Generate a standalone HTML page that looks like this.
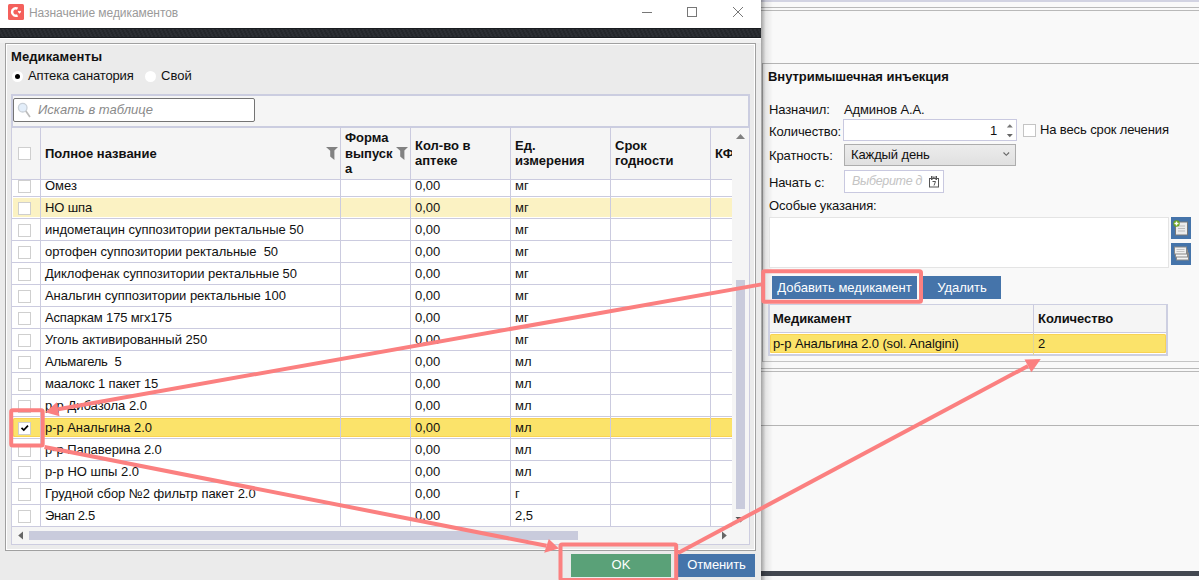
<!DOCTYPE html>
<html><head><meta charset="utf-8">
<style>
*{box-sizing:border-box;margin:0;padding:0}
html,body{width:1199px;height:580px;overflow:hidden;background:#f8f8f8;font-family:"Liberation Sans",sans-serif;font-size:13px;color:#111}
.abs{position:absolute}
#rw{position:absolute;left:761px;top:0;width:438px;height:580px;background:#f9f9f9}
#dlg{position:absolute;left:0;top:0;width:761px;height:580px;background:#ebebeb;overflow:hidden}
#tb{position:absolute;left:0;top:0;width:761px;height:28px;background:#fff}
#stripe{position:absolute;left:0;top:28px;width:761px;height:10px;background:#26292d;border-top:1px solid #191c20;border-bottom:1px solid #191c20;background-image:repeating-linear-gradient(63deg,#24272b 0,#24272b 1.800px,#2c2f34 1.800px,#2c2f34 3.600px)}
.t{position:absolute;white-space:nowrap;line-height:16px}
.b{font-weight:bold}
#rw .t{margin-top:1px;letter-spacing:-0.120px}
#rw .t.b{letter-spacing:-0.050px}
.vl{position:absolute;width:1px;background:#cbcbdf}
.hl{position:absolute;height:1px;background:#cbcbdf}
.cb{position:absolute;width:13px;height:13px;background:#fff;border:1px solid #cfcfcf}
.row{position:absolute;left:13px;width:720px;height:22px}
.row .n{position:absolute;left:32px;top:3px;line-height:16px;white-space:nowrap}
.row .q{position:absolute;left:402px;top:3px;line-height:16px}
.row .u{position:absolute;left:502px;top:3px;line-height:16px}
.row .cb{left:5px;top:5px}
.hov{left:0;top:1px;width:720px;height:19px;background:#fbf2c3}
.sel{left:0;top:1px;width:720px;height:19px;background:#fbe36a;border-radius:2px;box-shadow:inset 0 0 0 1px #f9d352,inset 0 -1px 0 #f5c63e}
.btn{position:absolute;color:#fff;text-align:center;line-height:22px;height:23px;padding-top:1px;background:#4574aa;white-space:nowrap}
</style></head><body>

<!-- right (background) window -->
<div id="rw">
  <div class="abs" style="left:0;top:0;width:438px;height:2px;background:#d2d3e2"></div>
  <div class="abs" style="left:0;top:7px;width:438px;height:1px;background:#b9b9b9"></div>
  <div class="abs" style="left:0;top:10px;width:438px;height:1px;background:#b9b9b9"></div>
  <!-- panel -->
  <div class="abs" style="left:1px;top:63px;width:437px;height:299px;border-top:1px solid #b4b4b4;border-left:1px solid #b4b4b4;border-bottom:1px solid #c4c4c4"></div>
  <div class="abs" style="left:0;top:368px;width:438px;height:1px;background:#b9b9b9"></div>
  <div class="abs" style="left:0;top:371px;width:438px;height:1px;background:#b9b9b9"></div>
  <div class="abs" style="left:0;top:425px;width:438px;height:1px;background:#b4b4b4"></div>
  <div class="abs" style="left:0;top:571px;width:438px;height:5px;background:#42474f"></div>
  <!-- shadow of dialog -->
  <div class="abs" style="left:0;top:0;width:12px;height:580px;background:linear-gradient(90deg,rgba(0,0,0,.35),rgba(0,0,0,.08) 40%,rgba(0,0,0,0))"></div>

  <div class="t b" style="left:7px;top:68px">Внутримышечная инъекция</div>
  <div class="t" style="left:8px;top:101px">Назначил:</div>
  <div class="t" style="left:83px;top:101px">Админов А.А.</div>
  <div class="t" style="left:8px;top:123px">Количество:</div>
  <div class="abs" style="left:82px;top:119px;width:174px;height:22px;background:#fff;border:1px solid #c9c9e0"></div>
  <div class="t" style="left:229px;top:122px">1</div>
  <svg class="abs" style="left:243px;top:122px" width="12" height="17"><path d="M2.800 5.500H8.800L5.800 2.300Z" fill="#777"/><path d="M2.800 12H8.800L5.800 15.200Z" fill="#666"/></svg>
  <div class="cb" style="left:262px;top:124px;border-color:#c4c4c4"></div>
  <div class="t" style="left:279px;top:121px">На весь срок лечения</div>
  <div class="t" style="left:8px;top:147px">Кратность:</div>
  <div class="abs" style="left:83px;top:144px;width:172px;height:22px;background:linear-gradient(#ececec,#e0e0e0);border:1px solid #adadad"></div>
  <div class="t" style="left:90px;top:146px">Каждый день</div>
  <svg class="abs" style="left:241px;top:151px" width="10" height="8"><path d="M1.500 1.500L4.300 4.300L7.100 1.500" fill="none" stroke="#666" stroke-width="1.100"/></svg>
  <div class="t" style="left:8px;top:174px">Начать с:</div>
  <div class="abs" style="left:83px;top:170px;width:100px;height:23px;background:#fff;border:1px solid #c9c9e0"></div>
  <div class="t" style="left:91px;top:172px;font-style:italic;color:#c4c4c4;font-size:12.500px;letter-spacing:-0.300px">Выберите д</div>
  <svg class="abs" style="left:168px;top:176px" width="11" height="12"><rect x="0.5" y="2.5" width="9" height="8.5" fill="#fff" stroke="#555"/><rect x="2" y="0" width="1.5" height="4" fill="#555"/><rect x="6.5" y="0" width="1.5" height="4" fill="#555"/><rect x="4.2" y="0.5" width="1.4" height="2.5" fill="#555"/><path d="M3.5 5.5 H6.5 L5 9.5" fill="none" stroke="#555" stroke-width="1"/></svg>
  <div class="t" style="left:8px;top:197px">Особые указания:</div>
  <div class="abs" style="left:8px;top:217px;width:400px;height:51px;background:#fff;border:1px solid #e4e4e4"></div>
  <!-- icon buttons -->
  <div class="abs" style="left:410px;top:217px;width:20px;height:22px;background:#4574aa"></div>
  <div class="abs" style="left:410px;top:243px;width:20px;height:22px;background:#4574aa"></div>
  <svg class="abs" style="left:410px;top:217px" width="20" height="48">
    <rect x="4.5" y="5" width="12" height="13" fill="#ececec" stroke="#777" stroke-width="1"/>
    <path d="M7 9H14M7 11.5H14M7 14H14" stroke="#bbb" stroke-width="1"/>
    <circle cx="5.5" cy="6.5" r="3.2" fill="#6aa31c"/><path d="M5.5 4.5V8.5M3.5 6.500H7.5" stroke="#fff" stroke-width="1.4"/>
    <rect x="5.500" y="36" width="12" height="7" fill="#f4f4f4" stroke="#888"/>
    <rect x="4.500" y="33" width="12" height="7" fill="#f4f4f4" stroke="#888"/>
    <rect x="3.500" y="30" width="12" height="7" fill="#f0f0f0" stroke="#888"/>
    <path d="M5.5 32.500H13.5M5.5 34.500H13.5" stroke="#c4c4c4"/>
  </svg>
  <!-- buttons -->
  <div class="btn" style="left:11px;top:276px;width:145px">Добавить медикамент</div>
  <div class="btn" style="left:162px;top:276px;width:78px">Удалить</div>
  <!-- table -->
  <div class="abs" style="left:7px;top:304px;width:400px;height:52px;background:#fff;border:2px solid #cdcfe1;border-top-width:1.500px"></div>
  <div class="abs" style="left:9px;top:305px;width:396px;height:28px;background:#f5f5f5;border-bottom:1px solid #cbcbdf"></div>
  <div class="vl" style="left:272px;top:305px;height:50px"></div>
  <div class="t b" style="left:12px;top:310px">Медикамент</div>
  <div class="t b" style="left:277px;top:310px">Количество</div>
  <div class="abs" style="left:9px;top:334px;width:396px;height:19px;background:#fbe36a;border-radius:2px;box-shadow:inset 0 0 0 1px #f9d352,inset 0 -1px 0 #f5c63e"></div>
  <div class="vl" style="left:272px;top:333px;height:22px;background:#e0d49a"></div>
  <div class="t" style="left:12px;top:335px">р-р Анальгина 2.0 (sol. Analgini)</div>
  <div class="t" style="left:277px;top:335px">2</div>
</div>

<!-- dialog -->
<div id="dlg">
  <div id="tb"></div>
  <svg class="abs" style="left:8px;top:4px" width="16" height="16"><rect width="16" height="16" rx="1.5" fill="#f4605c"/><path d="M9.56 4.690A3.750 3.750 0 1 0 9.560 11.310" fill="none" stroke="#fff" stroke-width="2.500"/><path d="M11.500 9.700L10 8.100A0.850 0.850 0 0 1 11.500 7.200A0.850 0.850 0 0 1 13 8.100Z" fill="#fff"/></svg>
  <div class="t" style="left:29px;top:5px;font-size:12px;letter-spacing:-0.060px;color:#9a9a9a">Назначение медикаментов</div>
  <svg class="abs" style="left:640px;top:0" width="120" height="28"><path d="M2 12.500H12" stroke="#777" stroke-width="1"/><rect x="47.500" y="7.500" width="9" height="9" fill="none" stroke="#777"/><path d="M93 7L103 17M103 7L93 17" stroke="#777" stroke-width="1"/></svg>
  <div id="stripe"></div>
  <div class="abs" style="left:0;top:38px;width:761px;height:5px;background:#f0f0f0;border-top:1px solid #fff"></div>
  <!-- group panel -->
  <div class="abs" style="left:5px;top:43px;width:751px;height:508px;border:1px solid #a0a0a0;box-shadow:inset 0 0 0 1px #fff"></div>
  <div class="t b" style="left:11px;top:49px;letter-spacing:0.090px">Медикаменты</div>
  <div class="abs" style="left:12px;top:71px;width:11px;height:11px;border-radius:50%;background:#fff"></div>
  <div class="abs" style="left:15px;top:74px;width:5px;height:5px;border-radius:50%;background:#000"></div>
  <div class="t" style="left:28px;top:68px;letter-spacing:-0.150px">Аптека санатория</div>
  <div class="abs" style="left:145px;top:71px;width:11px;height:11px;border-radius:50%;background:#fff"></div>
  <div class="t" style="left:161px;top:68px">Свой</div>

  <!-- search panel + grid frame -->
  <div class="abs" style="left:11px;top:94px;width:739px;height:451px;background:#f5f5f5;border:1px solid #cdcde0"></div>
  <div class="abs" style="left:11px;top:94px;width:739px;height:34px;border:2px solid #cbcde0"></div>
  <div class="abs" style="left:13px;top:98px;width:242px;height:24px;background:#fff;border:1px solid #747474;border-radius:2px"></div>
  <svg class="abs" style="left:17px;top:102px" width="16" height="18"><circle cx="5.700" cy="5.700" r="4.300" fill="#e3eefa" stroke="#c9d0d8" stroke-width="1.300"/><path d="M8.800 9L13 15" stroke="#bcbcbc" stroke-width="1.700"/></svg>
  <div class="t" style="left:38px;top:102px;font-style:italic;color:#8a8a8a">Искать в таблице</div>

  <!-- grid body bg -->
  <div class="abs" style="left:12px;top:180px;width:721px;height:347px;background:#fff"></div>
  <!-- header texts -->
  <div class="cb" style="left:18px;top:147px"></div>
  <div class="t b" style="left:45px;top:146px">Полное название</div>
  <div class="t b" style="left:345px;top:130px;line-height:15.500px;white-space:normal;width:50px">Форма выпуск а</div>
  <div class="t b" style="left:415px;top:138px;line-height:15px;white-space:normal;width:80px">Кол-во в аптеке</div>
  <div class="t b" style="left:515px;top:138px;line-height:15px;white-space:normal;width:80px">Ед. измерения</div>
  <div class="t b" style="left:615px;top:138px;line-height:15px;white-space:normal;width:80px">Срок годности</div>
  <div class="abs b" style="left:715px;top:146px;width:17px;overflow:hidden;line-height:16px;white-space:nowrap">КФ</div>
  <svg class="abs" style="left:326px;top:146px" width="13" height="15"><path d="M0 1H12L8.400 4.600V14L4.200 10.600V4.800Z" fill="#828282"/></svg>
  <svg class="abs" style="left:396px;top:146px" width="13" height="15"><path d="M0 1H12L8.400 4.600V14L4.200 10.600V4.800Z" fill="#828282"/></svg>
  <div class="hl" style="left:12px;top:179px;width:721px"></div>

  <div class="row" style="top:175px; clip-path:inset(5px 0 0 0);"><div class="cb"></div><div class="n">Омез</div><div class="q">0,00</div><div class="u">мг</div><div class="hl" style="left:-1px;top:21px;width:721px"></div></div>
<div class="row" style="top:197px;"><div class="abs hov"></div><div class="cb"></div><div class="n" style="letter-spacing:-0.135px">НО шпа</div><div class="q">0,00</div><div class="u">мг</div><div class="hl" style="left:-1px;top:21px;width:721px"></div></div>
<div class="row" style="top:219px;"><div class="cb"></div><div class="n">индометацин суппозитории ректальные 50</div><div class="q">0,00</div><div class="u">мг</div><div class="hl" style="left:-1px;top:21px;width:721px"></div></div>
<div class="row" style="top:241px;"><div class="cb"></div><div class="n" style="letter-spacing:-0.053px">ортофен суппозитории ректальные&nbsp; 50</div><div class="q">0,00</div><div class="u">мг</div><div class="hl" style="left:-1px;top:21px;width:721px"></div></div>
<div class="row" style="top:263px;"><div class="cb"></div><div class="n" style="letter-spacing:-0.049px">Диклофенак суппозитории ректальные 50</div><div class="q">0,00</div><div class="u">мг</div><div class="hl" style="left:-1px;top:21px;width:721px"></div></div>
<div class="row" style="top:285px;"><div class="cb"></div><div class="n" style="letter-spacing:-0.052px">Анальгин суппозитории ректальные 100</div><div class="q">0,00</div><div class="u">мг</div><div class="hl" style="left:-1px;top:21px;width:721px"></div></div>
<div class="row" style="top:307px;"><div class="cb"></div><div class="n" style="letter-spacing:-0.152px">Аспаркам 175 мгх175</div><div class="q">0,00</div><div class="u">мг</div><div class="hl" style="left:-1px;top:21px;width:721px"></div></div>
<div class="row" style="top:329px;"><div class="cb"></div><div class="n">Уголь активированный 250</div><div class="q">0,00</div><div class="u">мг</div><div class="hl" style="left:-1px;top:21px;width:721px"></div></div>
<div class="row" style="top:351px;"><div class="cb"></div><div class="n" style="letter-spacing:-0.239px">Альмагель&nbsp; 5</div><div class="q">0,00</div><div class="u">мл</div><div class="hl" style="left:-1px;top:21px;width:721px"></div></div>
<div class="row" style="top:373px;"><div class="cb"></div><div class="n" style="letter-spacing:-0.160px">маалокс 1 пакет 15</div><div class="q">0,00</div><div class="u">мл</div><div class="hl" style="left:-1px;top:21px;width:721px"></div></div>
<div class="row" style="top:395px;"><div class="cb"></div><div class="n">р-р Дибазола 2.0</div><div class="q">0,00</div><div class="u">мл</div><div class="hl" style="left:-1px;top:21px;width:721px"></div></div>
<div class="row" style="top:417px;"><div class="abs sel"></div><div class="cb"></div><svg class="abs" style="left:7px;top:7px" width="10" height="8"><path d="M1.500 3.800L3.800 6.100L8 1.700" fill="none" stroke="#000" stroke-width="1.700"/></svg><div class="n" style="letter-spacing:-0.055px">р-р Анальгина 2.0</div><div class="q">0,00</div><div class="u">мл</div><div class="hl" style="left:-1px;top:21px;width:721px"></div></div>
<div class="row" style="top:439px;"><div class="cb"></div><div class="n" style="letter-spacing:-0.057px">р-р Папаверина 2.0</div><div class="q">0,00</div><div class="u">мл</div><div class="hl" style="left:-1px;top:21px;width:721px"></div></div>
<div class="row" style="top:461px;"><div class="cb"></div><div class="n">р-р НО шпы 2.0</div><div class="q">0,00</div><div class="u">мл</div><div class="hl" style="left:-1px;top:21px;width:721px"></div></div>
<div class="row" style="top:483px;"><div class="cb"></div><div class="n" style="letter-spacing:-0.037px">Грудной сбор №2 фильтр пакет 2.0</div><div class="q">0,00</div><div class="u">г</div><div class="hl" style="left:-1px;top:21px;width:721px"></div></div>
<div class="row" style="top:505px;"><div class="cb"></div><div class="n" style="letter-spacing:-0.335px">Энап 2.5</div><div class="q">0,00</div><div class="u">2,5</div><div class="hl" style="left:-1px;top:21px;width:721px"></div></div>


  <!-- column lines -->
  <div class="vl" style="left:40px;top:127px;height:400px"></div>
  <div class="vl" style="left:340px;top:127px;height:400px"></div>
  <div class="vl" style="left:410px;top:127px;height:400px"></div>
  <div class="vl" style="left:510px;top:127px;height:400px"></div>
  <div class="vl" style="left:610px;top:127px;height:400px"></div>
  <div class="vl" style="left:710px;top:127px;height:400px"></div>

  <!-- vscroll -->
  <div class="abs" style="left:732px;top:128px;width:17px;height:399px;background:#f5f5f5"></div>
  <div class="abs" style="left:736px;top:280px;width:9px;height:229px;background:#c9cbdc"></div>
  <svg class="abs" style="left:735px;top:132px" width="12" height="8"><path d="M1 7L5.500 2L10 7Z" fill="#808080"/></svg>
  <svg class="abs" style="left:735px;top:516px" width="12" height="8"><path d="M0.500 1L5.500 6.500L10.500 1Z" fill="#555"/></svg>
  <!-- hscroll -->
  <div class="abs" style="left:12px;top:527px;width:736px;height:17px;background:#f5f5f5"></div>
  <div class="abs" style="left:29px;top:531px;width:549px;height:9px;background:#c9cbdc"></div>
  <svg class="abs" style="left:17px;top:530px" width="8" height="12"><path d="M6 1.500L1.200 5.500L6 9.500Z" fill="#666"/></svg>
  <svg class="abs" style="left:720px;top:530px" width="8" height="12"><path d="M2 1.500L6.800 5.500L2 9.500Z" fill="#666"/></svg>

  <!-- bottom buttons -->
  <div class="btn" style="left:571px;top:554px;width:100px;background:#5aa178;padding-top:0">OK</div>
  <div class="btn" style="left:678px;top:554px;width:77px;padding-top:0;letter-spacing:-0.100px">Отменить</div>
</div>

<!-- annotations -->
<svg class="abs" style="left:0;top:0" width="1199" height="580">
  <g fill="none" stroke="#fb8080" stroke-width="4">
    <rect x="763.200" y="271.200" width="157.800" height="30.600" rx="1.500"/>
    <rect x="11.200" y="410.300" width="31.500" height="35.200" rx="1.500"/>
    <rect x="560.500" y="544.500" width="115.700" height="35.500" rx="1.500"/>
    <path d="M761.500 284.400L58.100 409.200"/>
    <path d="M44.500 447L546.500 545.800"/>
    <path d="M678 553L1028 366"/>
  </g>
  <g fill="#fb8080">
    <path d="M45.300 412.300L56.700 402.200L59.500 416.200Z"/>
    <path d="M558.900 548.600L548.800 538.900L544.200 552.700Z"/>
    <path d="M1040.800 359.100L1024.500 359.400L1031.400 372.300Z"/>
  </g>
</svg>


</body></html>
